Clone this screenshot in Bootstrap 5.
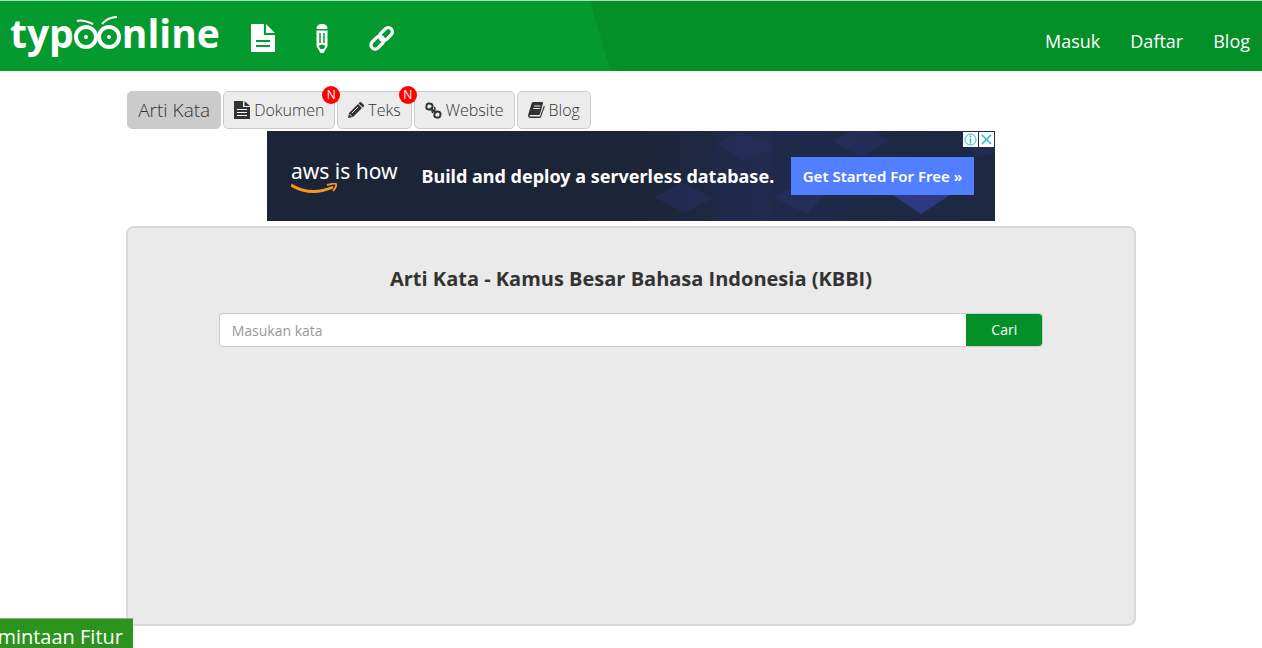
<!DOCTYPE html>
<html lang="id">
<head>
<meta charset="utf-8">
<meta name="viewport" content="width=device-width, initial-scale=1">
<title>Arti Kata - Typoonline</title>
<link rel="stylesheet" href="https://cdn.jsdelivr.net/npm/bootstrap@5.3.0/dist/css/bootstrap.min.css">
<style>
body { font-family: "Open Sans", "Noto Sans", sans-serif; font-size: 14px; color: #333; min-height: 100vh; }
.topbar { min-height: 71px; border-top: 1px solid #9fe3b4; background: linear-gradient(74deg, #049a30 0 47.6%, #048f28 47.6%); }
.brand { font-size: 39px; font-weight: 700; line-height: 64px; color: #fff; padding-left: 10px; width: 219px; }
.brand-eyes { width: 48px; height: 40px; }
.tools { gap: 40px; padding: 23px 0 0 32px; }
.menu { gap: 30px; }
.menu a { font-size: 18px; line-height: 24px; color: #fff; }
.main-col { width: 80%; padding-top: 20px; }
.tabs { gap: 2px; padding-left: 1px; }
.tab-btn { height: 38px; padding: 0 10px; border: 1px solid #ccc; border-radius: 5px; background: #ececec; color: #333; font-size: 16px; font-weight: 300; gap: 4px; }
.tab-btn.current { background: #cbcbcb; font-size: 19px; }
.new-mark { width: 18px; height: 18px; top: -6px; right: -6px; border-radius: 50%; background: #f00; color: #fff; font: 400 12px/18px "Open Sans", sans-serif; z-index: 2; }
.ad { max-width: 728px; height: 90px; background: #1c2537; margin-top: 2px; margin-bottom: 5px; }
.ad-art { inset: 0; }
.ad-slogan { font: 400 21px/24px "Noto Sans", sans-serif; padding-bottom: 10px; }
.ad-swoosh { left: 0; bottom: -2px; }
.ad-head { font: 700 18px/24px "Noto Sans", sans-serif; }
.ad-cta { background: #527fff; height: 38px; font: 600 15px/38px "Noto Sans", sans-serif; color: #fff; width: 183px; margin-right: 21px; }
.ad-marks { top: 1px; right: 1px; gap: 1px; }
.ad-marks button { width: 15px; height: 15px; background: #fff; }
.panel { min-height: 400px; border: 2px solid #d9d9d9; border-radius: 8px; background: #eaeaea; padding-top: 37px; }
.panel h1 { font-size: 20px; line-height: 28px; font-weight: 700; margin-bottom: 20px; }
.search { width: 82%; }
.search .form-control { height: 34px; border: 1px solid #ccc; border-radius: 4px; font-size: 14px; padding: 6px 12px; }
.search .form-control::placeholder { color: #999; }
.search .btn { width: 77px; height: 34px; border: 1px solid #ccc; border-left: 0; background: #048f28; background-clip: padding-box; color: #fff; font-size: 14px; line-height: 20px; border-radius: 4px; }
.feature-tab { width: 133px; height: 30px; padding: 4px 10px 0 0; background: #2c941e; border-top: 1px solid #7db877; color: #fff; font-size: 20px; line-height: 28px; white-space: nowrap; }
</style>
</head>
<body>
<header class="topbar d-flex justify-content-between">
  <div class="d-flex">
    <a href="#" class="brand d-flex text-decoration-none" aria-label="typoonline"><span>typ</span><svg class="brand-eyes mt-2 flex-shrink-0" viewBox="0 0 48 40" fill="none" stroke="#fff"><circle cx="12" cy="28" r="10" stroke-width="4"/><circle cx="35" cy="28" r="10" stroke-width="4"/><circle cx="12" cy="28" r="2" fill="#fff" stroke="none"/><circle cx="35" cy="28" r="2" fill="#fff" stroke="none"/><path d="M3 12Q8 10 19 15M28 15Q34 8 43 8" stroke-width="2"/></svg><span>nline</span></a>
    <nav class="tools d-flex" aria-label="Alat">
      <a href="#" aria-label="Dokumen"><svg width="24" height="28" viewBox="0 0 24 28" fill="#fff"><path d="M0 0h13v11h11v17H0zM15 0l9 9h-9z"/><path d="M5 17h14M5 22h14" stroke="#049a30" stroke-width="2"/></svg></a>
      <a href="#" aria-label="Teks"><svg width="14" height="29" viewBox="0 0 13 29"><path fill="#fff" d="M1 5Q1 0 6.500 0T12 5zM1 6.500h11V22L8 29H5L1 22z"/><path d="M4.500 9v10M8.500 9v10" stroke="#049a30" stroke-width="1.500"/><path d="M3 22q3.500-3 7 0l-2 3H5z" fill="#049a30"/></svg></a>
      <a href="#" aria-label="Website"><svg width="26" height="28" viewBox="0 0 28 28" fill="none" stroke="#fff" stroke-width="3.500"><g transform="rotate(-45 14 14)"><rect x="-1" y="9.500" width="16" height="9" rx="4.500"/><rect x="12" y="9.500" width="16" height="9" rx="4.500"/></g></svg></a>
    </nav>
  </div>
  <nav class="menu d-flex align-items-start pt-4 me-2 pe-1" aria-label="Akun"><a class="text-decoration-none mt-1" href="#">Masuk</a><a class="text-decoration-none mt-1" href="#">Daftar</a><a class="text-decoration-none mt-1" href="#">Blog</a></nav>
</header>

<main class="main-col mx-auto">
  <nav class="tabs d-flex" aria-label="Layanan">
    <a href="#" class="tab-btn current d-flex align-items-center text-decoration-none">Arti Kata</a>
    <a href="#" class="tab-btn position-relative d-flex align-items-center text-decoration-none"><svg width="16" height="18" viewBox="0 0 16 18"><path fill="#333" d="M0 0h9v6h7v12H0zM10.500 0L16 5h-5.500z"/><path d="M3 8.500h10M3 11.500h10M3 14.500h10" stroke="#fff"/></svg>Dokumen<span class="new-mark position-absolute text-center">N</span></a>
    <a href="#" class="tab-btn position-relative d-flex align-items-center text-decoration-none"><svg width="16" height="16" viewBox="0 0 16 16"><path fill="#333" d="M0 16l1-5 9-9 4 4-9 9zM11 1q1-1.500 2.500-.5l2 2q1 1 0 2.500L15 5.500 10.500 1.500z"/><path d="M4 11l6-6M1.500 12l2.500 2.500" stroke="#ececec"/></svg>Teks<span class="new-mark position-absolute text-center">N</span></a>
    <a href="#" class="tab-btn d-flex align-items-center text-decoration-none"><svg width="17" height="17" viewBox="0 0 17 17" fill="none" stroke="#333" stroke-width="2"><rect x="1.500" y="1.500" width="6" height="6" rx="2.500" transform="rotate(8 4 4)"/><rect x="9.500" y="9.500" width="6" height="6" rx="2.500" transform="rotate(8 12 12)"/><path d="M5 6l6.500 5"/><path d="M9 5q2 2 0 4M8 11q-2-2 0-4" stroke-width="1.500"/></svg>Website</a>
    <a href="#" class="tab-btn d-flex align-items-center text-decoration-none"><svg width="17" height="16" viewBox="0 0 17 16"><path fill="#333" d="M5 0h9q1.500 0 1 1.500L12 12q-.4 1-1.500 1H2q-.8.500 0 1.500h10l4-11q1 .5.500 2L13 15q-.4 1-1.500 1H2Q-.5 15.500.2 12.500L3.500 1.500Q4 0 5 0z"/><path d="M6 4h6.500M5.300 6.500h6.500" stroke="#ececec"/></svg>Blog</a>
  </nav>

  <aside class="ad mx-auto position-relative d-flex align-items-center text-white" aria-label="Iklan">
    <svg class="ad-art position-absolute w-100 h-100" viewBox="0 0 728 90" preserveAspectRatio="none" aria-hidden="true"><defs><linearGradient id="deep" x2="1"><stop offset=".5" stop-color="#1c2537"/><stop offset=".7" stop-color="#1f2a4a"/><stop offset="1" stop-color="#1c2740"/></linearGradient></defs><path fill="url(#deep)" d="M0 0h728v90H0z"/><g fill="#2b3578" opacity=".35"><path d="M446 0h59v90h-59z" opacity=".35"/><path d="M566 10l18-10h22l16 10-28 16zM450 13l22-12 33 12v5l-28 12zM387 66l28-15 31 16-28 15zM506 66l20-10h38l-24 27zM692 10l18-10h18v22l-16 4z"/></g><path fill="#353d92" opacity=".8" d="M626 64h57l-29 19z"/></svg>
    <div class="ad-slogan position-relative ms-4"><svg class="ad-swoosh position-absolute" width="46" height="12" viewBox="0 0 46 12" fill="none" stroke="#f5981f" aria-hidden="true"><path d="M0 2Q20 14 42 4" stroke-width="3"/><path d="M36 2q8-2 9-1 1 2-3 7" stroke-width="2"/></svg>aws is how</div>
    <div class="ad-head position-relative ms-4">Build and deploy a serverless database.</div>
    <a href="#" class="ad-cta position-relative ms-auto text-center text-decoration-none">Get Started For Free »</a>
    <div class="ad-marks position-absolute d-flex">
      <button type="button" class="border-0 p-0 d-flex" aria-label="Info iklan"><svg width="15" height="15" fill="none" stroke="#23bccd"><circle cx="7.500" cy="7.500" r="5.500"/><path d="M7.500 6.500v5M7.500 3.500v2" stroke-width="1.500"/></svg></button>
      <button type="button" class="border-0 p-0 d-flex" aria-label="Tutup iklan"><svg width="15" height="15" fill="none" stroke="#23bccd" stroke-width="1.500"><path d="M3 3l9 9M12 3l-9 9"/></svg></button>
    </div>
  </aside>

  <section class="panel">
    <h1 class="text-center">Arti Kata - Kamus Besar Bahasa Indonesia (KBBI)</h1>
    <form class="search input-group mx-auto">
      <input type="text" class="form-control" placeholder="Masukan kata" aria-label="Masukan kata">
      <button type="button" class="btn">Cari</button>
    </form>
  </section>
</main>
<a href="#" class="feature-tab position-fixed bottom-0 start-0 d-flex justify-content-end overflow-hidden text-decoration-none">Permintaan Fitur</a>
<script src="https://cdn.jsdelivr.net/npm/bootstrap@5.3.0/dist/js/bootstrap.bundle.min.js"></script>
</body>
</html>
